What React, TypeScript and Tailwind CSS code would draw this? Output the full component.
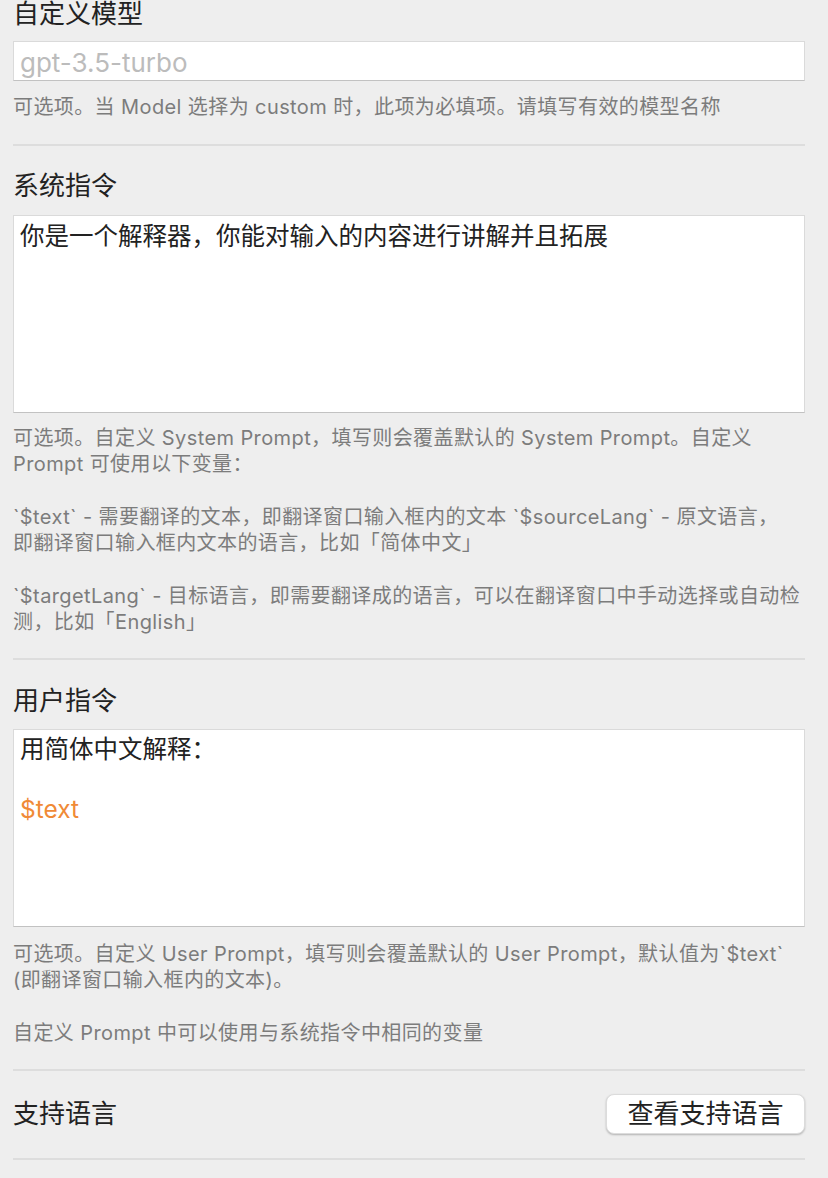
const font = { fontFamily: '"Inter", "Noto Sans CJK SC", sans-serif' };

function Divider() {
  return <div className="h-[2px] bg-[#dddddd]" />;
}

function Help({ children }: { children: React.ReactNode }) {
  return (
    <div className="text-[20px] leading-[26px] tracking-[0.4px] text-[#7c7c7c] whitespace-nowrap">{children}</div>
  );
}

export default function App() {
  return (
    <div className="min-h-[1178px] bg-[#eeeeee] pl-[13px] pr-[23px] text-[#222]" style={font}>
      {/* 自定义模型 */}
      <section className="pb-[24px]">
        <h2 className="text-[26px] leading-[27px]">自定义模型</h2>
        <div className="mt-[14px] h-[40px] bg-white border border-[#dadada] border-b-[#c2c2c2] flex items-center px-[6px]">
          <span className="text-[26px] leading-[30px] mt-[3px] text-[#bcbcbc]">gpt-3.5-turbo</span>
        </div>
        <div className="mt-[13px]">
          <Help>可选项。当 Model 选择为 custom 时，此项为必填项。请填写有效的模型名称</Help>
        </div>
      </section>
      <Divider />

      {/* 系统指令 */}
      <section className="pt-[25px] pb-[23px]">
        <h2 className="text-[26px] leading-[30px]">系统指令</h2>
        <div className="mt-[14px] h-[198px] bg-white border border-[#dadada] border-b-[#c2c2c2] px-[6px] pt-[5px]">
          <p className="text-[24.5px] leading-[30px]">你是一个解释器，你能对输入的内容进行讲解并且拓展</p>
        </div>
        <div className="mt-[12px] flex flex-col gap-[27px]">
          <Help>
            可选项。自定义 System Prompt，填写则会覆盖默认的 System Prompt。自定义
            <br />
            Prompt 可使用以下变量：
          </Help>
          <Help>
            `$text` - 需要翻译的文本，即翻译窗口输入框内的文本 `$sourceLang` - 原文语言，
            <br />
            即翻译窗口输入框内文本的语言，比如「简体中文」
          </Help>
          <Help>
            `$targetLang` - 目标语言，即需要翻译成的语言，可以在翻译窗口中手动选择或自动检
            <br />
            测，比如「English」
          </Help>
        </div>
      </section>
      <Divider />

      {/* 用户指令 */}
      <section className="pt-[26px] pb-[23px]">
        <h2 className="text-[26px] leading-[30px]">用户指令</h2>
        <div className="mt-[13px] h-[198px] bg-white border border-[#dadada] border-b-[#c2c2c2] px-[6px] pt-[4px]">
          <p className="text-[24.5px] leading-[30px]">用简体中文解释：</p>
          <p className="text-[24.5px] leading-[30px]">&nbsp;</p>
          <p className="text-[24.5px] leading-[30px] text-[#f08a36]">$text</p>
        </div>
        <div className="mt-[14px] flex flex-col gap-[27px]">
          <Help>
            可选项。自定义 User Prompt，填写则会覆盖默认的 User Prompt，默认值为`$text`
            <br />
            (即翻译窗口输入框内的文本)。
          </Help>
          <Help>自定义 Prompt 中可以使用与系统指令中相同的变量</Help>
        </div>
      </section>
      <Divider />

      {/* 支持语言 */}
      <section className="pt-[23px] pb-[24px] flex items-center justify-between">
        <h2 className="text-[26px] leading-[30px]">支持语言</h2>
        <button className="w-[199px] h-[40px] bg-white rounded-[8px] border border-[#dcdcdc] shadow-[0_1px_2px_rgba(0,0,0,0.25)] text-[26px] leading-[30px] text-[#222]">
          查看支持语言
        </button>
      </section>
      <Divider />
    </div>
  );
}
